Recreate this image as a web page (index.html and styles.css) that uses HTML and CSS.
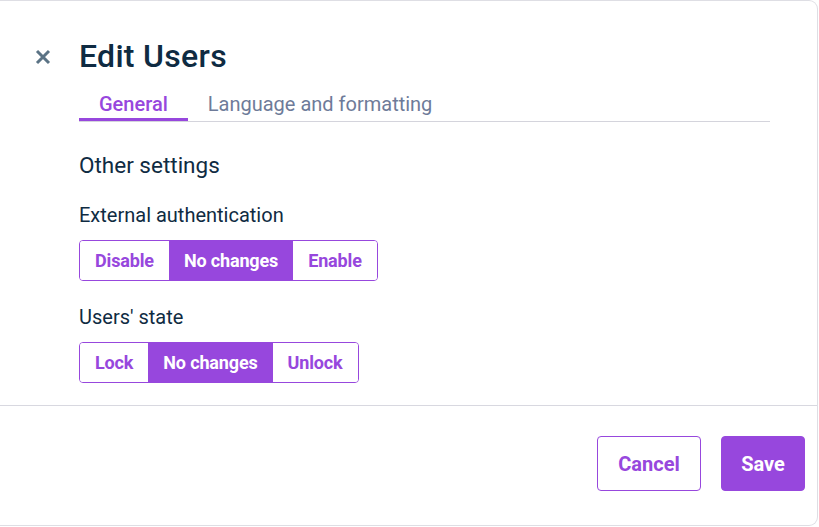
FILE: index.html
```html
<!DOCTYPE html>
<html lang="en">
<head>
  <meta charset="UTF-8" />
  <title>Edit Users</title>
  <link rel="stylesheet" href="styles.css">
</head>
<body>
  <div class="dialog">
    <header class="dialog-head">
      <button class="close" aria-label="Close">
        <svg width="16" height="16" viewBox="0 0 16 16">
          <path d="M2 2 L14 14 M14 2 L2 14" stroke="#5b7385" stroke-width="3" />
        </svg>
      </button>
      <h1>Edit Users</h1>
    </header>

    <nav class="tabs">
      <a class="tab active">General</a>
      <a class="tab">Language and formatting</a>
    </nav>

    <main class="body">
      <h2>Other settings</h2>

      <div class="field">
        <label>External authentication</label>
        <div class="segmented">
          <button>Disable</button>
          <button class="on">No changes</button>
          <button>Enable</button>
        </div>
      </div>

      <div class="field">
        <label>Users' state</label>
        <div class="segmented">
          <button>Lock</button>
          <button class="on">No changes</button>
          <button>Unlock</button>
        </div>
      </div>
    </main>

    <footer class="actions">
      <button class="btn btn-outline">Cancel</button>
      <button class="btn btn-primary">Save</button>
    </footer>
  </div>
</body>
</html>
```

FILE: styles.css
```css
/* Base */
body {
  margin: 0;
  font-family: Roboto, 'Noto Sans', sans-serif;
  background: #fff;
  color: #0f2b42;
}

.dialog {
  width: 818px;
  height: 526px;
  border: 1px solid #dedee4;
  border-left: none;
  border-radius: 0 9px 9px 0;
  box-sizing: border-box;
  display: flex;
  flex-direction: column;
}

/* Header */
.dialog-head {
  display: flex;
  align-items: center;
  padding: 36px 0 0 35px;
}

.close {
  background: none;
  border: none;
  padding: 0;
  width: 16px;
  height: 16px;
  display: flex;
  margin-right: 28px;
  margin-top: 2px;
  cursor: pointer;
}

h1 {
  margin: 0;
  font-size: 32px;
  line-height: 38px;
  font-weight: 500;
  letter-spacing: 0.3px;
  color: #0f2b42;
}

/* Tabs */
.tabs {
  display: flex;
  margin: 17px 47px 0 79px;
  border-bottom: 1px solid #d4d4dc;
}

.tab {
  font-size: 20px;
  line-height: 24px;
  padding: 0 20px 5px;
  color: #6e7b99;
  cursor: pointer;
}

.tab.active {
  color: #9747dd;
  font-weight: 500;
  box-shadow: inset 0 -3px 0 #9747dd;
}

/* Content */
.body {
  padding: 0 0 0 79px;
  flex: 1;
}

h2 {
  margin: 30px 0 0;
  font-size: 22.5px;
  font-weight: 400;
  line-height: 26px;
}

.field label {
  display: block;
  font-size: 20px;
  line-height: 24px;
  margin-top: 25px;
  margin-bottom: 13px;
}

.field + .field label {
  margin-top: 24px;
}

.segmented {
  display: inline-flex;
  border: 1px solid #9747dd;
  border-radius: 4px;
  overflow: hidden;
}

.segmented button {
  background: #fff;
  border: none;
  color: #9747dd;
  font-family: inherit;
  font-size: 18px;
  font-weight: 700;
  height: 39px;
  padding: 0 15px;
  letter-spacing: -0.15px;
  cursor: pointer;
}

.segmented button.on {
  background: #9747dd;
  color: #fff;
}

/* Footer */
.actions {
  border-top: 1px solid #d8d8e0;
  height: 120px;
  box-sizing: border-box;
  display: flex;
  justify-content: flex-end;
  align-items: flex-start;
  gap: 20px;
  padding: 30px 12px 0 0;
}

.btn {
  height: 55px;
  border-radius: 4px;
  font-family: inherit;
  font-size: 20px;
  font-weight: 700;
  padding: 0;
  cursor: pointer;
}

.btn-outline {
  background: #fff;
  color: #9747dd;
  border: 1px solid #9747dd;
  width: 104px;
}

.btn-primary {
  background: #9747dd;
  color: #fff;
  border: 1px solid #9747dd;
  width: 84px;
}
```
